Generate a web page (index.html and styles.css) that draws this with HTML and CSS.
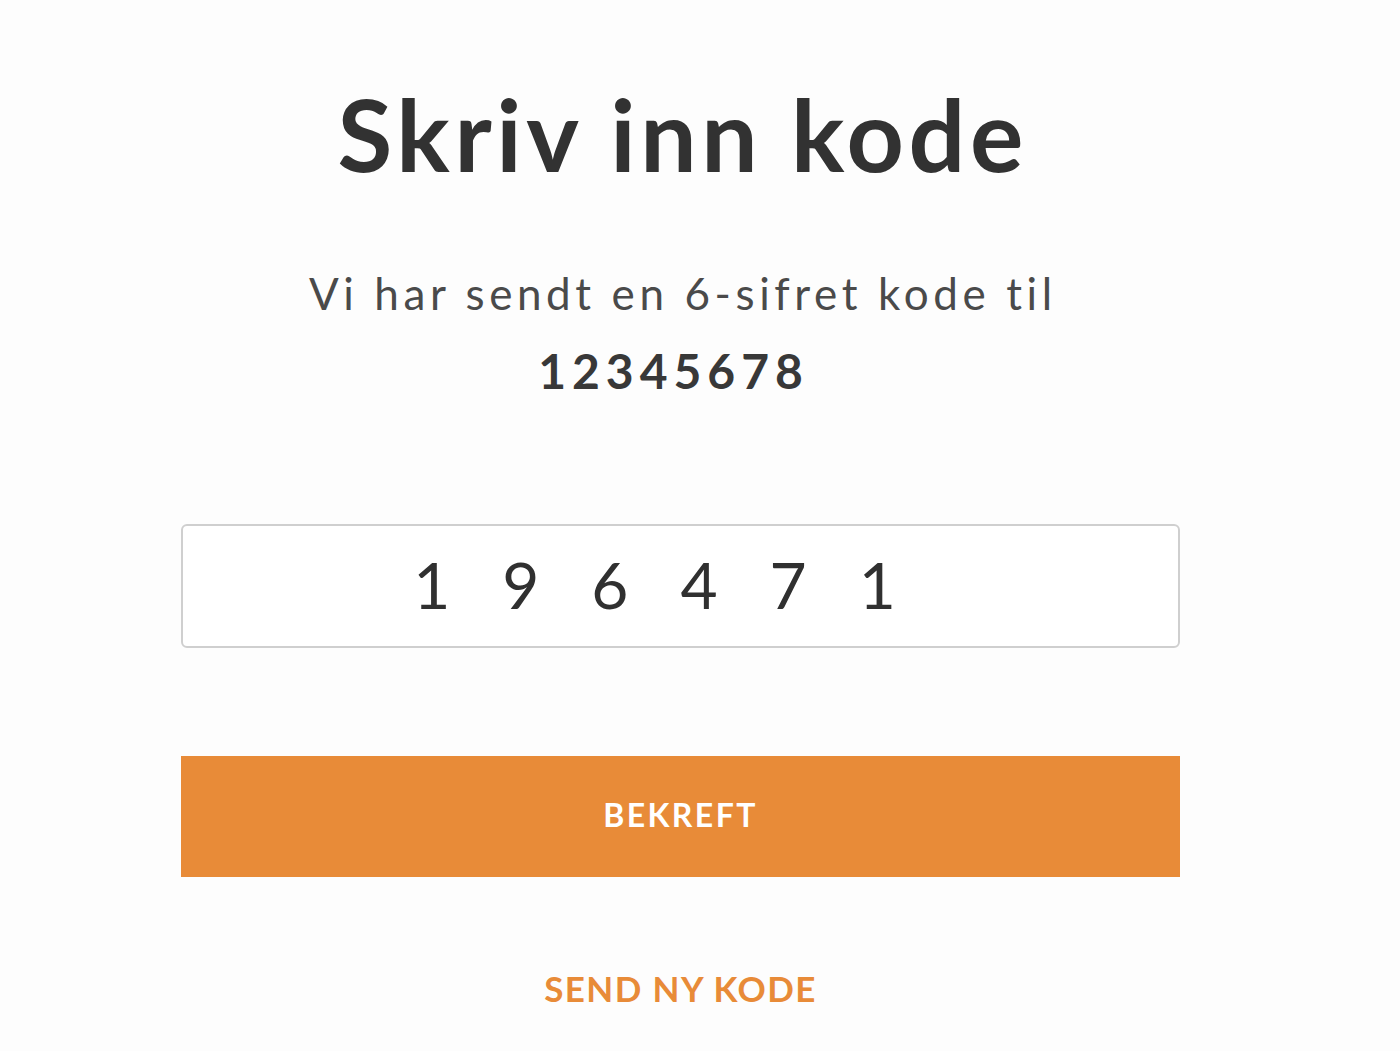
FILE: index.html
```html
<!DOCTYPE html>
<html lang="no">
<head>
<meta charset="utf-8">
<title>Skriv inn kode</title>
<link rel="stylesheet" href="styles.css">
</head>
<body>
<main class="page">
  <h1 class="title">Skriv inn kode</h1>
  <p class="lead">Vi har sendt en 6-sifret kode til</p>
  <p class="phone">12345678</p>
  <div class="code-input">196471</div>
  <button class="confirm" type="button">BEKREFT</button>
  <a class="resend" href="#">SEND NY KODE</a>
</main>
</body>
</html>
```

FILE: styles.css
```css
html, body {
  margin: 0;
  padding: 0;
  background: #fdfdfd;
}

body {
  font-family: "Lato", "Liberation Sans", sans-serif;
  color: #333333;
}

.page {
  width: 999px;
  margin-left: 181px;
  display: flex;
  flex-direction: column;
  align-items: stretch;
  text-align: center;
}

.title {
  margin: 83px 0 0;
  font-size: 100px;
  line-height: 100px;
  font-weight: 700;
  color: #323232;
  letter-spacing: 4.6px;
  text-indent: 4.6px;
}

.lead {
  margin: 72px 0 0;
  font-size: 44px;
  line-height: 77px;
  font-weight: 400;
  color: #4a4a4a;
  letter-spacing: 4.6px;
  text-indent: 4.6px;
}

.phone {
  margin: 0;
  padding-right: 14px;
  font-size: 48px;
  line-height: 77px;
  font-weight: 700;
  color: #383838;
  letter-spacing: 6px;
}

.code-input {
  margin-top: 115px;
  height: 120px;
  border: 2px solid #cfcfcf;
  border-radius: 6px;
  background: #ffffff;
  font-size: 64px;
  line-height: 118px;
  color: #303030;
  letter-spacing: 52px;
  text-align: center;
}

.confirm {
  margin-top: 108px;
  height: 121px;
  border: 0;
  border-radius: 0;
  background: #e88b38;
  color: #ffffff;
  font-family: inherit;
  font-size: 32px;
  font-weight: 700;
  letter-spacing: 2.4px;
  padding: 0 0 4px;
}

.resend {
  margin-top: 86px;
  font-size: 35px;
  line-height: 50px;
  font-weight: 700;
  color: #e88b38;
  text-decoration: none;
  letter-spacing: 1.4px;
  align-self: center;
}
```
